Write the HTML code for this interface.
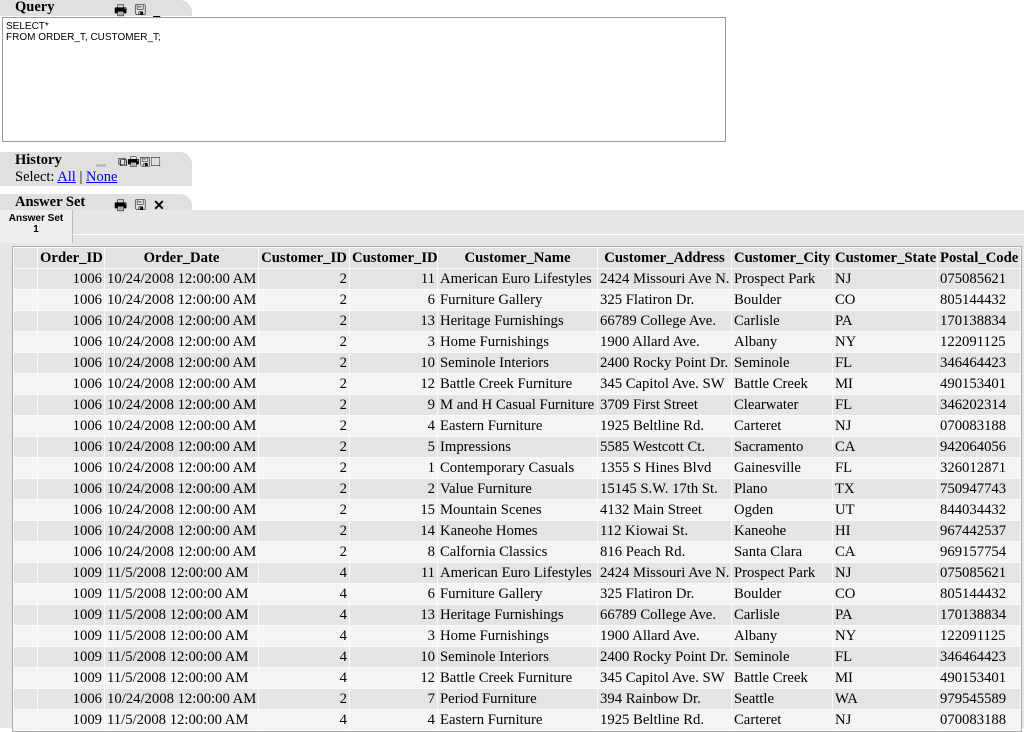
<!DOCTYPE html><html><head><style>
body{margin:0;width:1024px;height:728px;overflow:hidden;background:#fff;font-family:"Liberation Serif",serif;position:relative}
.tab{position:absolute;left:0;background:#e0e0e0;border-radius:0 12px 0 0}
.t{position:absolute;font-weight:bold;font-size:14.5px}
textarea{position:absolute;left:2px;top:17px;width:716px;height:117px;border:1px solid #999;font-family:"Liberation Sans",sans-serif;font-size:10px;padding:3px;margin:0;resize:none;line-height:11px}
a{color:#00e}
table{position:absolute;left:12px;top:246px;width:1008px;table-layout:fixed;border-collapse:separate;border-spacing:1px;background:#fafafa;border:1px solid #aaa;font-size:14.7px}
td,th{height:20px;padding:0 2px;white-space:nowrap;line-height:20px;overflow:hidden}
th{background:#e2e2e2}
tr:nth-child(even) td{background:#e4e4e4}
tr:nth-child(odd) td{background:#f4f4f4}
td.n{text-align:right}
</style></head><body>
<div class="tab" style="top:0;width:192px;height:16px"></div>
<div class="t" style="left:15px;top:-1px">Query</div>
<div style="position:absolute;left:114px;top:0;font-size:14px">🖶 &nbsp;🖫 &nbsp;<b>_</b></div>
<textarea>SELECT*
FROM ORDER_T, CUSTOMER_T;</textarea>
<div class="tab" style="top:152px;width:192px;height:34px"></div>
<div class="t" style="left:15px;top:152px">History</div>
<div style="position:absolute;left:96px;top:164px;width:10px;height:3px;background:#bbb"></div>
<div style="position:absolute;left:118px;top:153px;font-size:13px">⧉🖶🖫☐</div>
<div style="position:absolute;left:15px;top:169px;font-size:14.5px">Select: <a href="#">All</a> | <a href="#">None</a></div>
<div class="tab" style="top:194px;width:192px;height:20px"></div>
<div style="position:absolute;left:0;top:210px;width:1024px;height:518px;background:#e6e6e6"></div>
<div class="t" style="left:15px;top:194px">Answer Set</div>
<div style="position:absolute;left:114px;top:195px;font-size:14px">🖶 &nbsp;🖫 &nbsp;<b>✕</b></div>
<div style="position:absolute;left:0;top:210px;width:72px;height:30px;background:#eee;border-right:1px solid #bbb;font:bold 10px 'Liberation Sans',sans-serif;text-align:center;line-height:11px;padding-top:3px">Answer Set<br>1</div>
<div style="position:absolute;left:73px;top:234px;width:951px;height:1px;background:#fff"></div>
<table>
<colgroup><col style="width:23px"><col style="width:66px"><col style="width:153px"><col style="width:90px"><col style="width:87px"><col style="width:159px"><col style="width:133px"><col style="width:100px"><col style="width:104px"><col style="width:82px"></colgroup>
<tr><th></th><th>Order_ID</th><th>Order_Date</th><th>Customer_ID</th><th>Customer_ID</th><th>Customer_Name</th><th>Customer_Address</th><th>Customer_City</th><th>Customer_State</th><th>Postal_Code</th></tr>
<tr><td></td><td class="n">1006</td><td>10/24/2008 12:00:00 AM</td><td class="n">2</td><td class="n">11</td><td>American Euro Lifestyles</td><td>2424 Missouri Ave N.</td><td>Prospect Park</td><td>NJ</td><td>075085621</td></tr>
<tr><td></td><td class="n">1006</td><td>10/24/2008 12:00:00 AM</td><td class="n">2</td><td class="n">6</td><td>Furniture Gallery</td><td>325 Flatiron Dr.</td><td>Boulder</td><td>CO</td><td>805144432</td></tr>
<tr><td></td><td class="n">1006</td><td>10/24/2008 12:00:00 AM</td><td class="n">2</td><td class="n">13</td><td>Heritage Furnishings</td><td>66789 College Ave.</td><td>Carlisle</td><td>PA</td><td>170138834</td></tr>
<tr><td></td><td class="n">1006</td><td>10/24/2008 12:00:00 AM</td><td class="n">2</td><td class="n">3</td><td>Home Furnishings</td><td>1900 Allard Ave.</td><td>Albany</td><td>NY</td><td>122091125</td></tr>
<tr><td></td><td class="n">1006</td><td>10/24/2008 12:00:00 AM</td><td class="n">2</td><td class="n">10</td><td>Seminole Interiors</td><td>2400 Rocky Point Dr.</td><td>Seminole</td><td>FL</td><td>346464423</td></tr>
<tr><td></td><td class="n">1006</td><td>10/24/2008 12:00:00 AM</td><td class="n">2</td><td class="n">12</td><td>Battle Creek Furniture</td><td>345 Capitol Ave. SW</td><td>Battle Creek</td><td>MI</td><td>490153401</td></tr>
<tr><td></td><td class="n">1006</td><td>10/24/2008 12:00:00 AM</td><td class="n">2</td><td class="n">9</td><td>M and H Casual Furniture</td><td>3709 First Street</td><td>Clearwater</td><td>FL</td><td>346202314</td></tr>
<tr><td></td><td class="n">1006</td><td>10/24/2008 12:00:00 AM</td><td class="n">2</td><td class="n">4</td><td>Eastern Furniture</td><td>1925 Beltline Rd.</td><td>Carteret</td><td>NJ</td><td>070083188</td></tr>
<tr><td></td><td class="n">1006</td><td>10/24/2008 12:00:00 AM</td><td class="n">2</td><td class="n">5</td><td>Impressions</td><td>5585 Westcott Ct.</td><td>Sacramento</td><td>CA</td><td>942064056</td></tr>
<tr><td></td><td class="n">1006</td><td>10/24/2008 12:00:00 AM</td><td class="n">2</td><td class="n">1</td><td>Contemporary Casuals</td><td>1355 S Hines Blvd</td><td>Gainesville</td><td>FL</td><td>326012871</td></tr>
<tr><td></td><td class="n">1006</td><td>10/24/2008 12:00:00 AM</td><td class="n">2</td><td class="n">2</td><td>Value Furniture</td><td>15145 S.W. 17th St.</td><td>Plano</td><td>TX</td><td>750947743</td></tr>
<tr><td></td><td class="n">1006</td><td>10/24/2008 12:00:00 AM</td><td class="n">2</td><td class="n">15</td><td>Mountain Scenes</td><td>4132 Main Street</td><td>Ogden</td><td>UT</td><td>844034432</td></tr>
<tr><td></td><td class="n">1006</td><td>10/24/2008 12:00:00 AM</td><td class="n">2</td><td class="n">14</td><td>Kaneohe Homes</td><td>112 Kiowai St.</td><td>Kaneohe</td><td>HI</td><td>967442537</td></tr>
<tr><td></td><td class="n">1006</td><td>10/24/2008 12:00:00 AM</td><td class="n">2</td><td class="n">8</td><td>Calfornia Classics</td><td>816 Peach Rd.</td><td>Santa Clara</td><td>CA</td><td>969157754</td></tr>
<tr><td></td><td class="n">1009</td><td>11/5/2008 12:00:00 AM</td><td class="n">4</td><td class="n">11</td><td>American Euro Lifestyles</td><td>2424 Missouri Ave N.</td><td>Prospect Park</td><td>NJ</td><td>075085621</td></tr>
<tr><td></td><td class="n">1009</td><td>11/5/2008 12:00:00 AM</td><td class="n">4</td><td class="n">6</td><td>Furniture Gallery</td><td>325 Flatiron Dr.</td><td>Boulder</td><td>CO</td><td>805144432</td></tr>
<tr><td></td><td class="n">1009</td><td>11/5/2008 12:00:00 AM</td><td class="n">4</td><td class="n">13</td><td>Heritage Furnishings</td><td>66789 College Ave.</td><td>Carlisle</td><td>PA</td><td>170138834</td></tr>
<tr><td></td><td class="n">1009</td><td>11/5/2008 12:00:00 AM</td><td class="n">4</td><td class="n">3</td><td>Home Furnishings</td><td>1900 Allard Ave.</td><td>Albany</td><td>NY</td><td>122091125</td></tr>
<tr><td></td><td class="n">1009</td><td>11/5/2008 12:00:00 AM</td><td class="n">4</td><td class="n">10</td><td>Seminole Interiors</td><td>2400 Rocky Point Dr.</td><td>Seminole</td><td>FL</td><td>346464423</td></tr>
<tr><td></td><td class="n">1009</td><td>11/5/2008 12:00:00 AM</td><td class="n">4</td><td class="n">12</td><td>Battle Creek Furniture</td><td>345 Capitol Ave. SW</td><td>Battle Creek</td><td>MI</td><td>490153401</td></tr>
<tr><td></td><td class="n">1006</td><td>10/24/2008 12:00:00 AM</td><td class="n">2</td><td class="n">7</td><td>Period Furniture</td><td>394 Rainbow Dr.</td><td>Seattle</td><td>WA</td><td>979545589</td></tr>
<tr><td></td><td class="n">1009</td><td>11/5/2008 12:00:00 AM</td><td class="n">4</td><td class="n">4</td><td>Eastern Furniture</td><td>1925 Beltline Rd.</td><td>Carteret</td><td>NJ</td><td>070083188</td></tr>
</table>
</body></html>
